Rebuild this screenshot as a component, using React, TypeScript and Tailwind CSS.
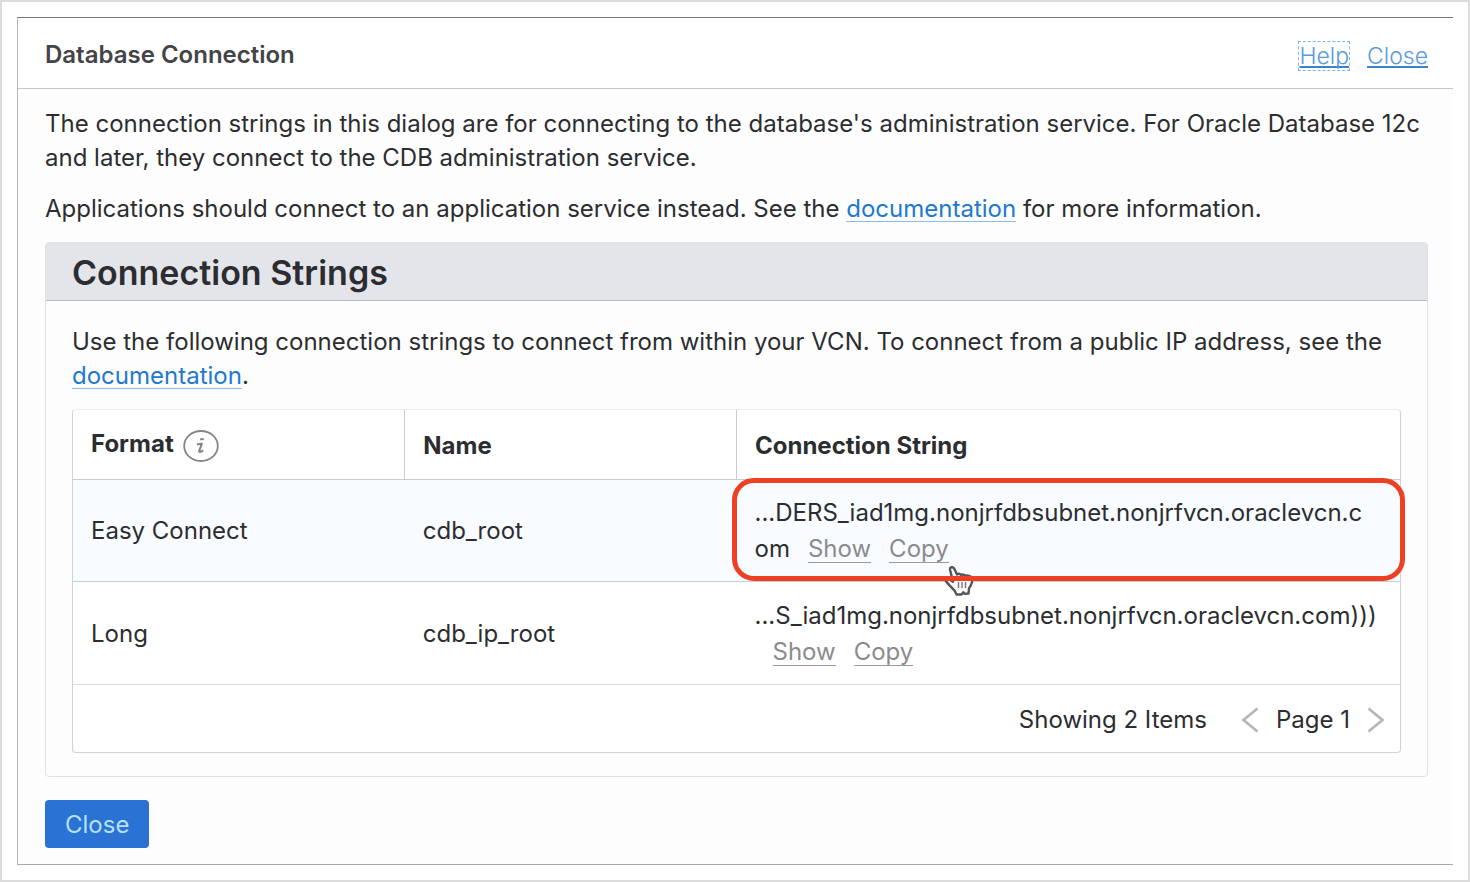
import React from "react";

type Row = { format: string; name: string; lines: string[]; highlighted?: boolean };

const rows: Row[] = [
  {
    format: "Easy Connect",
    name: "cdb_root",
    lines: ["...DERS_iad1mg.nonjrfdbsubnet.nonjrfvcn.oraclevcn.c", "om"],
    highlighted: true,
  },
  {
    format: "Long",
    name: "cdb_ip_root",
    lines: ["...S_iad1mg.nonjrfdbsubnet.nonjrfvcn.oraclevcn.com)))", ""],
  },
];

function DocLink() {
  return (
    <a
      href="#documentation"
      className="text-[#2179cf] underline decoration-[#8dbbe8] decoration-1 underline-offset-4 [text-decoration-skip-ink:none]"
    >
      documentation
    </a>
  );
}

function InfoIcon() {
  return (
    <svg viewBox="0 0 36 32" className="mt-1 h-8 w-9" fill="none" aria-hidden="true">
      <ellipse cx="18" cy="16" rx="16.800" ry="15" stroke="#858585" strokeWidth="1.800" />
      <path d="M17.200 9.200h3.600" stroke="#858585" strokeWidth="2" />
      <path
        d="M14 14.600c1.600-.6 3-.8 4.800-.8l-2.600 7c-.3 1.500 1.300 1.500 4-.4"
        stroke="#858585"
        strokeWidth="2.100"
        strokeLinejoin="round"
      />
    </svg>
  );
}

function Chevron({ direction }: { direction: "left" | "right" }) {
  return (
    <svg viewBox="0 0 18 26" className="h-[26px] w-[18px]" fill="none" stroke="#b5b5b8" strokeWidth="2.6" aria-hidden="true">
      <path d={direction === "left" ? "M16.5 1.5 2.500 13l14 11.500" : "M1.500 1.500 15.500 13l-14 11.500"} />
    </svg>
  );
}

function HandPointer() {
  return (
    <svg viewBox="0 0 34 34" className="absolute top-[85px] left-[206px] h-[34px] w-[34px]" aria-hidden="true">
      <path
        d="M7 4.500C6.500 2 10 1.300 11.300 3.700L14 9.500c1.500-1 3.200-.6 4 .4 1.600-.8 3.200-.3 4 .8 2.600-.6 6 .2 7 2.300.6 3.400-.7 7.200-2.900 10.200l-.6 5.300-4 .3-1.200-1.600-1.800 2.300H13.500l-1.700-3.500C8.800 22.200 5 19.500 2.500 15.500c-1-1.700 1.300-2.500 3.500-1.300l4 2.600z"
        fill="#fafafa"
        stroke="#555"
        strokeWidth="2.400"
        strokeLinejoin="round"
      />
      <path d="M15.500 17v6M19 17v6M22.500 17v6" stroke="#777" strokeWidth="1.400" />
    </svg>
  );
}

function ActionButton({ children }: { children: React.ReactNode }) {
  return (
    <button type="button" className="ml-[18px] border-b border-[#9a9a9a] leading-[26px] text-[#8b8b8d]">
      {children}
    </button>
  );
}

export default function App() {
  return (
    <div className="flex min-h-screen flex-col border-2 border-[#dcdcdc] bg-white p-[15px] font-[Inter,'Liberation_Sans',sans-serif] text-[24px] leading-[34px] text-[#2c2d30]">
      <section className="flex-1 border-t border-b border-l border-t-[#77777a] border-b-[#a9a9ab] border-l-[#b5b5bb] bg-[#fdfdfd]">
        <header className="flex h-[71px] items-center justify-between border-b border-[#c6c6cb] bg-white pt-1 pr-6 pl-[27px]">
          <h1 className="font-semibold text-[#444447]">Database Connection</h1>
          <nav className="flex gap-4 pt-px text-[23px] leading-7 font-light text-[#5a9bdc]">
            <a href="#help" className="border border-dashed border-[#7db4e6] underline decoration-[#3b82c8] decoration-2 underline-offset-2 [text-decoration-skip-ink:none]">
              Help
            </a>
            <a href="#close" className="border border-transparent underline decoration-[#3b82c8] decoration-2 underline-offset-2 [text-decoration-skip-ink:none]">
              Close
            </a>
          </nav>
        </header>

        <div className="pt-[18px] pr-[25px] pl-[27px]">
          <p>
            The connection strings in this dialog are for connecting to the database's administration service. For
            Oracle Database 12c and later, they connect to the CDB administration service.
          </p>
          <p className="mt-[17px]">
            Applications should connect to an application service instead. See the <DocLink /> for more information.
          </p>

          <section className="mt-4 rounded-sm border border-[#e1e1e4]">
            <h2 className="border-b border-[#b9bac2] bg-[#e3e5ea] px-[26px] pt-0.5 text-[34px] leading-[55px] font-semibold">
              Connection Strings
            </h2>
            <div className="px-[26px] pt-6 pb-[23px]">
              <p>
                Use the following connection strings to connect from within your VCN. To connect from a public IP
                address, see the <DocLink />.
              </p>
              <div className="mt-4 rounded-sm border border-[#d2d3d9] border-t-[#ececee] bg-white">
                <table className="w-full table-fixed border-collapse text-left">
                  <thead>
                    <tr className="h-[69px] border-b border-[#c9ccd4]">
                      <th className="w-1/4 border-r border-[#c9ccd4] px-[18px] font-bold">
                        <span className="flex items-center gap-[9px]">
                          Format
                          <InfoIcon />
                        </span>
                      </th>
                      <th className="w-1/4 border-r border-[#c9ccd4] px-[18px] pt-1 font-bold">Name</th>
                      <th className="w-1/2 px-[18px] pt-1 font-bold">Connection String</th>
                    </tr>
                  </thead>
                  <tbody>
                    {rows.map((row) => (
                      <tr
                        key={row.name}
                        className={
                          row.highlighted
                            ? "h-[102px] border-b border-[#c9ccd4] bg-[#f8fbff]"
                            : "h-[103px] border-b border-[#d9d9dc]"
                        }
                      >
                        <td className="px-[18px] pt-0.5">{row.format}</td>
                        <td className="px-[18px] pt-0.5">{row.name}</td>
                        <td className="relative px-[18px] pt-0.5 leading-9">
                          {row.lines[0]}
                          <br />
                          {row.lines[1]}
                          <ActionButton>Show</ActionButton>
                          <ActionButton>Copy</ActionButton>
                          {row.highlighted && (
                            <>
                              <HandPointer />
                              <span className="pointer-events-none absolute -inset-x-[5px] -top-0.5 bottom-0 rounded-[22px] border-[5px] border-[#ee4023]" />
                            </>
                          )}
                        </td>
                      </tr>
                    ))}
                  </tbody>
                </table>
                <div className="flex h-[67px] items-center justify-end pt-1 pr-[15px]">
                  <span>Showing 2 Items</span>
                  <button type="button" aria-label="Previous page" className="ml-[34px]">
                    <Chevron direction="left" />
                  </button>
                  <span className="mx-[17px]">Page 1</span>
                  <button type="button" aria-label="Next page">
                    <Chevron direction="right" />
                  </button>
                </div>
              </div>
            </div>
          </section>

          <button type="button" className="mt-[23px] mb-4 block h-12 rounded-[4px] bg-[#2a72d4] px-5 pt-0.5 text-[#b5e0fb]">
            Close
          </button>
        </div>
      </section>
    </div>
  );
}
